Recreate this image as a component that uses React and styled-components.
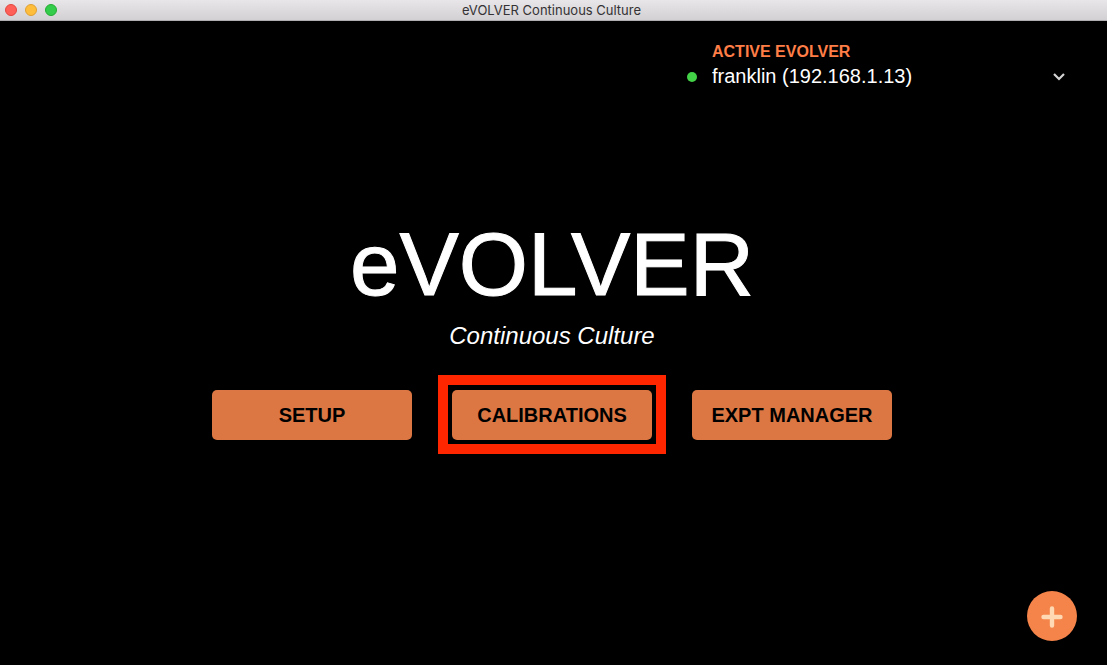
import React from "react";
import styled, { createGlobalStyle } from "styled-components";

const GlobalStyle = createGlobalStyle`
  * { box-sizing: border-box; }
  body {
    margin: 0;
    background: #000;
    color: #fff;
    font-family: "Liberation Sans", Arial, sans-serif;
  }
`;

const Window = styled.div`
  min-height: 100vh;
  display: flex;
  flex-direction: column;
`;

const TitleBar = styled.header`
  display: grid;
  grid-template-columns: 1fr auto 1fr;
  align-items: center;
  height: 21px;
  padding: 0 9px 0 5px;
  background: linear-gradient(#e8e6e8, #d2d0d2);
  border-bottom: 1px solid #b0aeb0;
`;

const Lights = styled.div`
  display: flex;
  gap: 8px;
`;

const Light = styled.span`
  width: 12px;
  height: 12px;
  border-radius: 50%;
  background: ${(p) => p.$fill};
  border: 1px solid ${(p) => p.$edge};
`;

const WindowTitle = styled.span`
  color: #343234;
  font: 13px/20px Inter, sans-serif;
`;

const Picker = styled.div`
  align-self: flex-end;
  display: grid;
  grid-template-columns: 10px 1fr 14px;
  column-gap: 15px;
  align-items: center;
  width: 379px;
  margin: 21px 41px 0 0;
`;

const PickerLabel = styled.label`
  grid-column: 2 / 4;
  color: #ff7e47;
  font-size: 16px;
  font-weight: bold;
  line-height: 20px;
`;

const StatusDot = styled.span`
  grid-area: 2 / 1;
  width: 10px;
  height: 10px;
  border-radius: 50%;
  background: #42d147;
`;

const Select = styled.select`
  grid-area: 2 / 2 / 3 / 4;
  width: 100%;
  height: 30px;
  margin: 0;
  padding: 0 0 2px;
  appearance: none;
  border: 0;
  background: transparent;
  color: #fff;
  font-family: inherit;
  font-size: 20px;
`;

const Chevron = styled.svg`
  grid-area: 2 / 3;
  width: 14px;
  height: 14px;
  pointer-events: none;
`;

const Hero = styled.main`
  display: flex;
  flex-direction: column;
  align-items: center;
  padding: 120px 3px 0 0;
`;

const Name = styled.h1`
  margin: 0;
  font-size: 89px;
  font-weight: normal;
  line-height: 104px;
  -webkit-text-stroke: 1px #fff;
`;

const Tagline = styled.p`
  margin: 6px 0 0;
  font-size: 24px;
  font-style: italic;
  line-height: 28px;
`;

const Actions = styled.nav`
  display: flex;
  flex-wrap: wrap;
  justify-content: center;
  gap: 40px;
  margin-top: 40px;
`;

const ActionButton = styled.button`
  position: relative;
  width: 200px;
  height: 50px;
  padding: 0;
  border: 0;
  border-radius: 5px;
  background: #dc7743;
  color: #000;
  font-family: inherit;
  font-size: 20px;
  font-weight: bold;

  &::after {
    content: "";
    display: ${(p) => (p.$highlighted ? "block" : "none")};
    position: absolute;
    inset: -15px -14px -14px;
    border: 10px solid #ff2600;
    pointer-events: none;
  }
`;

const AddButton = styled.button`
  display: grid;
  place-items: center;
  align-self: flex-end;
  width: 50px;
  height: 50px;
  margin: auto 30px 24px 0;
  padding: 0;
  border: 0;
  border-radius: 50%;
  background: #f5844a;
`;

const actions = [
  { label: "SETUP" },
  { label: "CALIBRATIONS", highlighted: true },
  { label: "EXPT MANAGER" },
];

export default function App() {
  return (
    <Window>
      <GlobalStyle />
      <TitleBar>
        <Lights>
          <Light $fill="#ff5f57" $edge="#e2463f" />
          <Light $fill="#ffbd3c" $edge="#dfa032" />
          <Light $fill="#34cc4b" $edge="#24ac34" />
        </Lights>
        <WindowTitle>eVOLVER Continuous Culture</WindowTitle>
      </TitleBar>
      <Picker>
        <PickerLabel htmlFor="evolver">ACTIVE EVOLVER</PickerLabel>
        <StatusDot />
        <Select id="evolver">
          <option>franklin (192.168.1.13)</option>
        </Select>
        <Chevron viewBox="0 0 14 14" aria-hidden="true">
          <path d="M2 4 L7 9 L12 4" fill="none" stroke="#d4d4d4" strokeWidth="2.2" />
        </Chevron>
      </Picker>
      <Hero>
        <Name>eVOLVER</Name>
        <Tagline>Continuous Culture</Tagline>
        <Actions>
          {actions.map((a) => (
            <ActionButton key={a.label} type="button" $highlighted={a.highlighted}>
              {a.label}
            </ActionButton>
          ))}
        </Actions>
      </Hero>
      <AddButton type="button" aria-label="Add">
        <svg width="24" height="24" viewBox="0 0 24 24" aria-hidden="true">
          <path
            d="M12 4.5 V21.5 M3.5 13 H20.5"
            stroke="#ffd9b3"
            strokeWidth="4.4"
            strokeLinecap="round"
          />
        </svg>
      </AddButton>
    </Window>
  );
}
